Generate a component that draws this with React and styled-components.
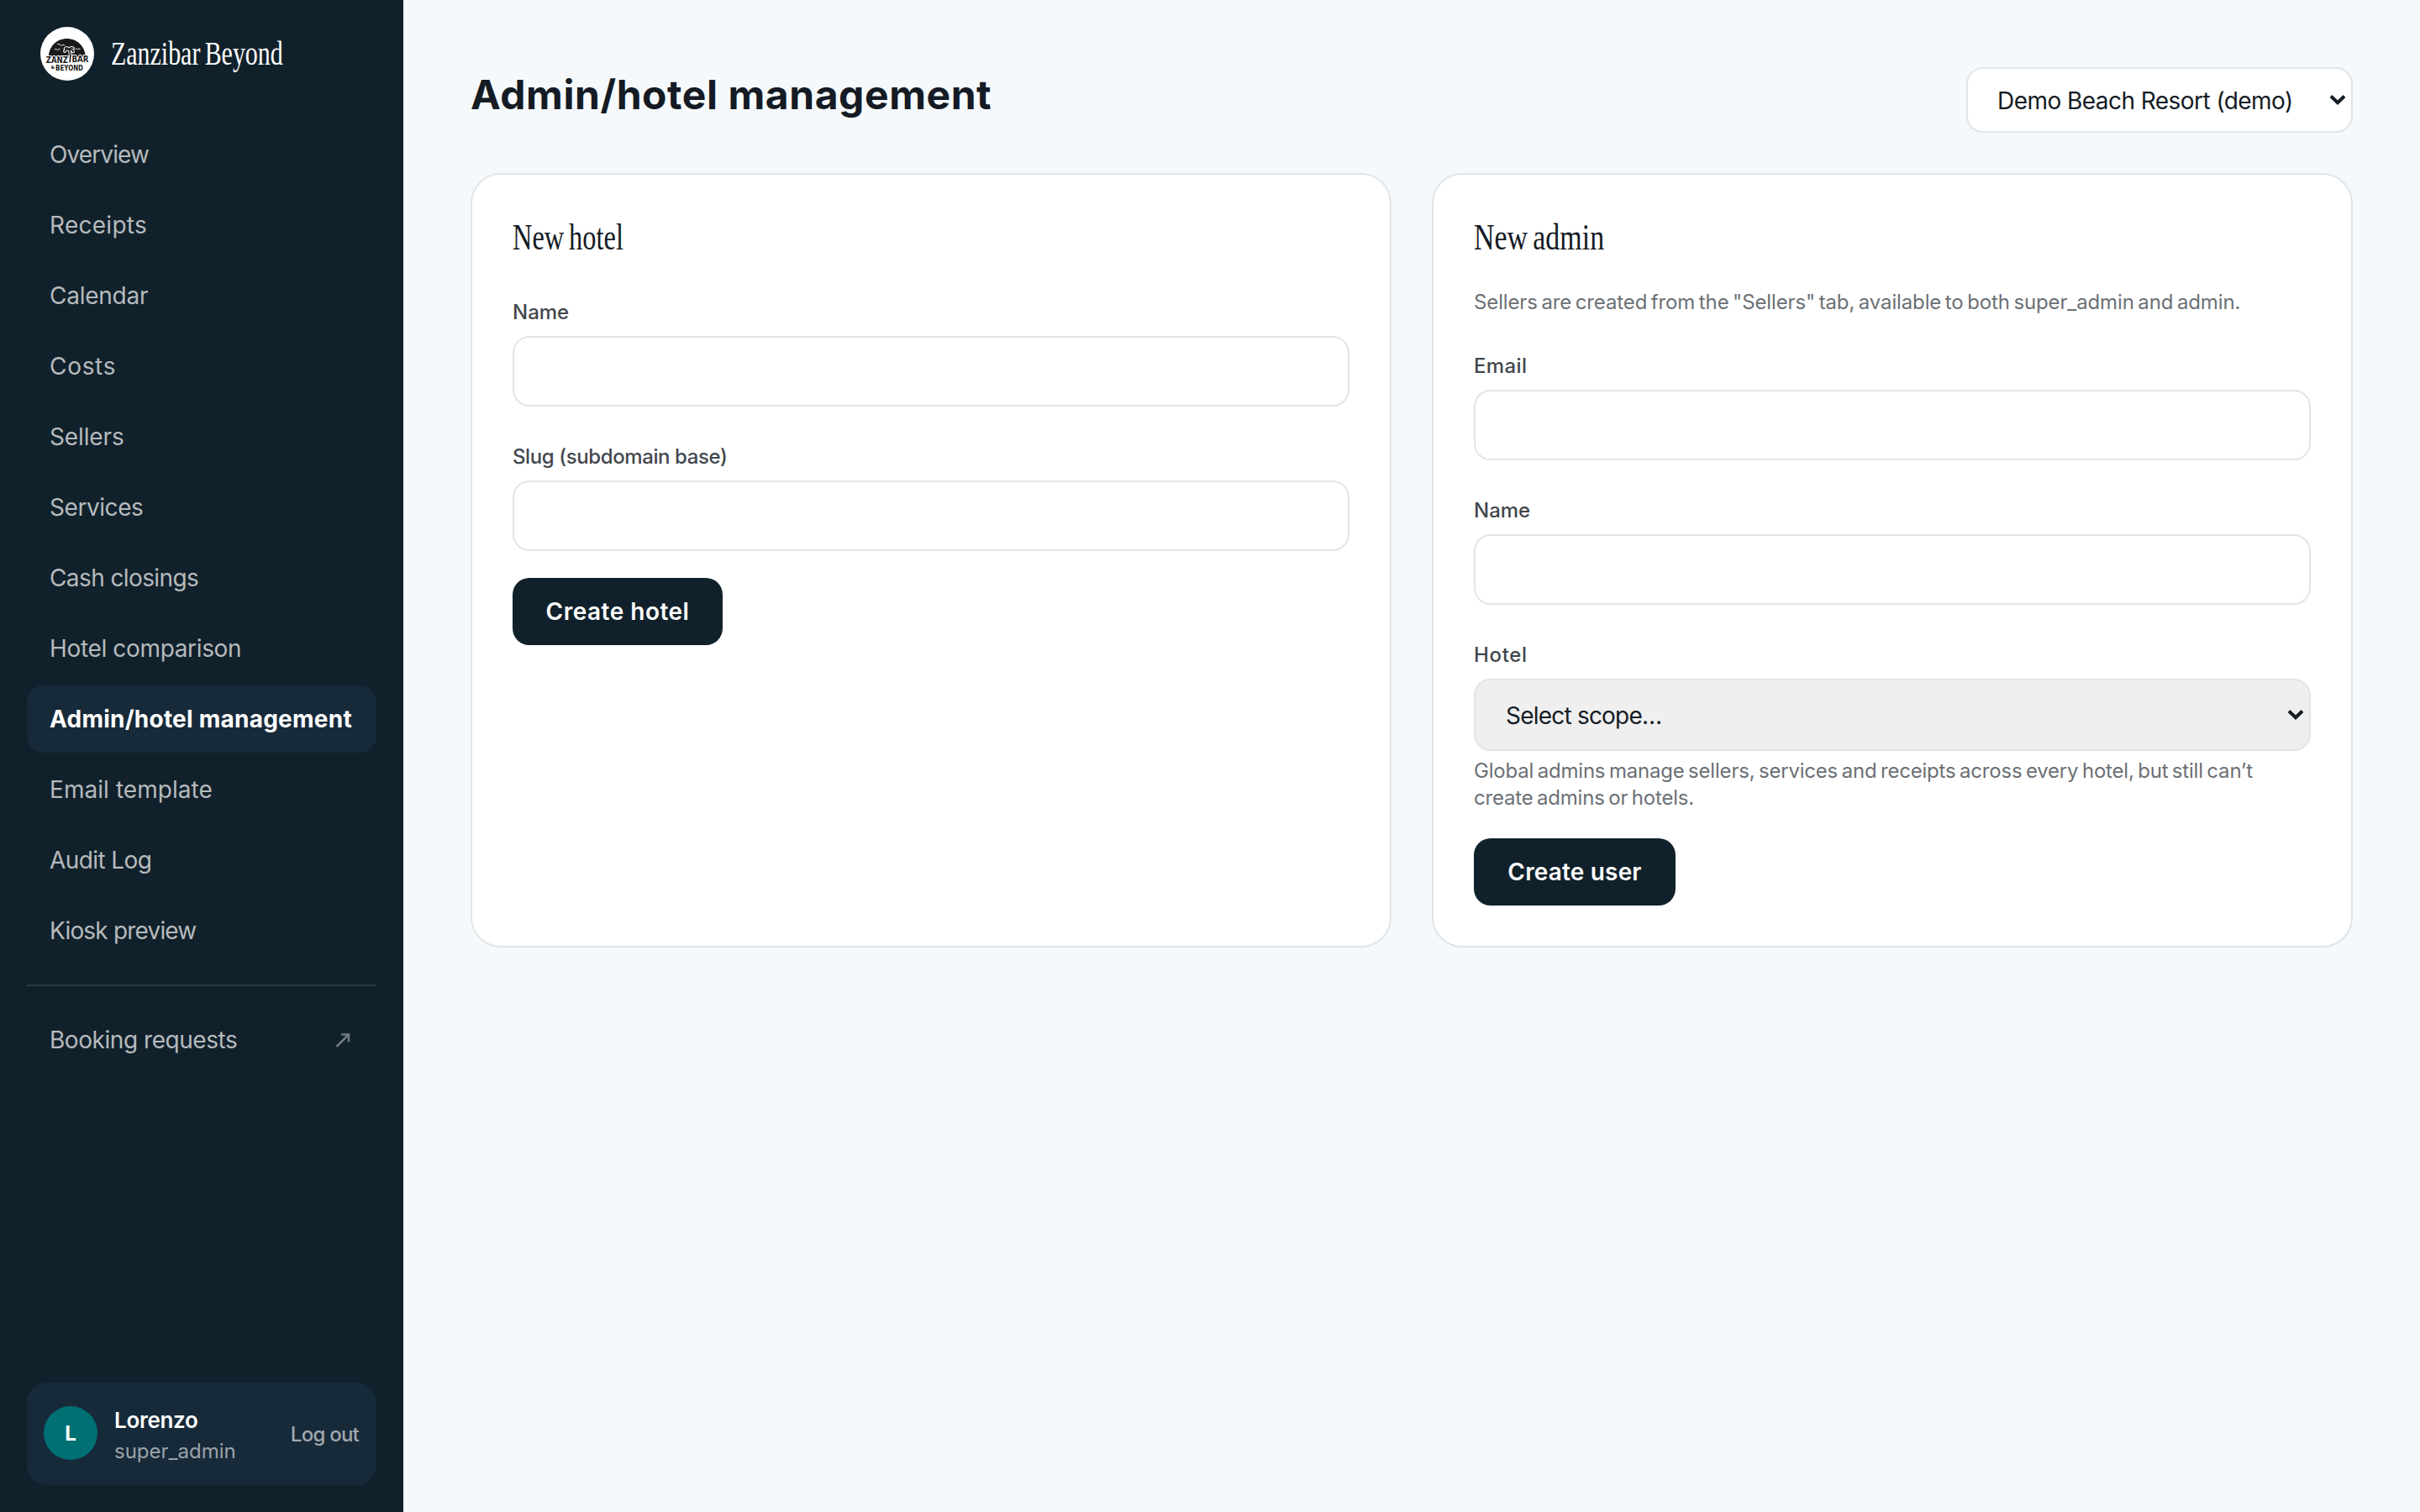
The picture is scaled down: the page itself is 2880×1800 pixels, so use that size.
import React from "react";
import styled, { createGlobalStyle } from "styled-components";

const colors = {
  primary: "#11212b",
  secondary: "#172a3a",
  accent: "#007074",
  page: "#f5f9fc",
  border: "#e1e5e8",
  text: "#141b24",
  label: "#42474d",
  muted: "#6b7075",
};

const GlobalStyle = createGlobalStyle`
  * {
    box-sizing: border-box;
  }
  body {
    margin: 0;
    background: ${colors.page};
    color: ${colors.text};
    font-family: Inter, "Liberation Sans", sans-serif;
    font-kerning: normal;
  }
  button {
    font-family: inherit;
    border: none;
    cursor: pointer;
  }
`;

const Layout = styled.div`
  display: flex;
  height: 100vh;
`;

// ---------- sidebar ----------

const Sidebar = styled.aside`
  display: flex;
  flex-direction: column;
  width: 480px;
  flex-shrink: 0;
  padding: 32px;
  background: ${colors.primary};
`;

const Brand = styled.div`
  display: flex;
  align-items: center;
  gap: 20px;
  height: 64px;
  padding: 0 16px;
  margin-bottom: 48px;
`;

const Logo = styled.svg`
  width: 64px;
  height: 64px;
  flex-shrink: 0;
`;

// Serif headings are condensed horizontally
const Condensed = styled.span`
  display: inline-block;
  font-family: "Liberation Serif", serif;
  font-weight: 400;
  font-size: ${({ $size }) => $size}px;
  line-height: 52px;
  white-space: nowrap;
  word-spacing: -3px;
  transform: scaleX(${({ $scale }) => $scale});
  transform-origin: left center;
`;

const BrandName = styled(Condensed)`
  padding-bottom: 3px;
  color: white;
`;

const Nav = styled.nav`
  display: flex;
  flex-direction: column;
  gap: 4px;
`;

const NavItem = styled.a`
  display: flex;
  align-items: center;
  justify-content: space-between;
  height: 80px;
  padding: 0 28px 0 27px;
  border-radius: 20px;
  font-size: 28px;
  white-space: nowrap;
  letter-spacing: ${({ $track }) => $track || 0}px;
  font-weight: ${({ $active }) => ($active ? 700 : 400)};
  color: ${({ $active }) => ($active ? "white" : "#b6babd")};
  background: ${({ $active }) => ($active ? colors.secondary : "transparent")};
`;

const ExternalIcon = styled.svg`
  width: 20px;
  height: 20px;
  margin-right: 2px;
  color: #70797f;
`;

const Divider = styled.hr`
  width: 100%;
  height: 2px;
  margin: 24px 0;
  border: none;
  background: #293841;
`;

const UserCard = styled.div`
  display: flex;
  align-items: center;
  height: 122px;
  margin-top: auto;
  padding: 0 21px 0 20px;
  border-radius: 24px;
  background: ${colors.secondary};
`;

const Avatar = styled.div`
  display: flex;
  align-items: center;
  justify-content: center;
  width: 64px;
  height: 64px;
  margin-top: -2px;
  border-radius: 50%;
  background: ${colors.accent};
  color: white;
  font-size: 24px;
  font-weight: 700;
`;

const UserInfo = styled.div`
  flex: 1;
  margin-left: 20px;
  padding-top: 2px;
`;

const UserName = styled.div`
  color: white;
  font-size: 26px;
  font-weight: 600;
  line-height: 40px;
  letter-spacing: -0.3px;
`;

const UserRole = styled.div`
  color: #9ca3a9;
  font-size: 24px;
  line-height: 34px;
`;

const LogoutBtn = styled.button`
  padding: 0;
  background: none;
  color: #a2a9ae;
  font-size: 24px;
  font-weight: 500;
  letter-spacing: -0.75px;
`;

// ---------- main ----------

const Main = styled.main`
  flex: 1;
  padding: 80px;
`;

const Header = styled.header`
  display: flex;
  justify-content: space-between;
  align-items: flex-start;
  height: 126px;
`;

const Title = styled.h1`
  margin: 0;
  font-size: 48px;
  font-weight: 700;
  line-height: 66px;
  letter-spacing: 0.56px;
`;

const SelectBox = styled.div`
  display: flex;
  align-items: center;
  justify-content: space-between;
  border: 2px solid ${colors.border};
  border-radius: 20px;
  font-size: 28px;
  letter-spacing: ${({ $track }) => $track || 0}px;
`;

const HotelSelect = styled(SelectBox)`
  width: 460px;
  height: 78px;
  padding: 2px 6px 0 35px;
  background: white;
`;

const ScopeSelect = styled(SelectBox)`
  height: 86px;
  padding: 2px 6px 0 36px;
  background: #efefef;
`;

const Chevron = styled.svg`
  width: 20px;
  height: 14px;
  margin-top: -3px;
`;

const Grid = styled.div`
  display: grid;
  grid-template-columns: 1fr 1fr;
  gap: 48px;
`;

const Card = styled.section`
  height: 922px;
  padding: 48px;
  border: 2px solid ${colors.border};
  border-radius: 36px;
  background: white;
`;

const CardTitle = styled.h2`
  height: 56px;
  margin: 0;
  font-weight: 400;
`;

const Description = styled.p`
  margin: 32px 0 0;
  color: ${colors.muted};
  font-size: 24px;
  line-height: 32px;
  letter-spacing: -0.13px;
  word-spacing: -2px;
`;

const Hint = styled.p`
  margin: 8px 0 32px;
  color: ${colors.muted};
  font-size: 24px;
  line-height: 32px;
  letter-spacing: -0.2px;
  word-spacing: -2px;
`;

const Field = styled.div`
  margin-top: 44px;
`;

const Label = styled.label`
  display: block;
  margin-bottom: 12px;
  color: ${colors.label};
  font-size: 24px;
  font-weight: 500;
  line-height: 32px;
  letter-spacing: ${({ $track }) => $track || 0}px;
`;

const Input = styled.input`
  display: block;
  width: 100%;
  height: 84px;
  padding: 0 36px;
  border: 2px solid ${colors.border};
  border-radius: 20px;
  background: white;
  font-size: 28px;
  outline: none;
`;

const SubmitBtn = styled.button`
  display: block;
  width: ${({ $width }) => $width}px;
  height: 80px;
  margin-top: 32px;
  padding: 0;
  border-radius: 20px;
  background: ${colors.primary};
  color: white;
  font-size: 28px;
  font-weight: 600;
  letter-spacing: ${({ $track }) => $track || 0}px;
`;

const navItems = [
  { label: "Overview", track: -0.89 },
  { label: "Receipts", track: 0.28 },
  { label: "Calendar", track: -0.24 },
  { label: "Costs", track: 0.7 },
  { label: "Sellers", track: -0.12 },
  { label: "Services", track: -0.44 },
  { label: "Cash closings", track: -0.6 },
  { label: "Hotel comparison", track: -0.35 },
  { label: "Admin/hotel management", track: 0.24, active: true },
  { label: "Email template", track: 0.06 },
  { label: "Audit Log", track: -0.6 },
  { label: "Kiosk preview", track: -0.82 },
];

function BrandLogo() {
  return (
    <Logo viewBox="0 0 64 64">
      <circle cx="32" cy="32" r="32" fill="white" />
      <path d="M9.8 35.5C10.3 23 19.5 14 31.6 14s21.5 9 22.1 21.5z" fill="#1a1a1a" />
      {/* birds */}
      <g fill="none" stroke="white" strokeWidth="0.9" strokeLinecap="round">
        <path d="M20.5 20.5q3-.6 4.200 1.800q1.800-1.600 4-.6" />
        <path d="M17.5 26.5q2.400-.2 3 1.200q1-1.400 2.600-1.400" />
        <path d="M42 26q2-.2 2.600 1q1-1.200 2.600-1" />
      </g>
      <g
        fill="#1a1a1a"
        stroke="white"
        strokeWidth="2"
        paintOrder="stroke"
        fontFamily="'DejaVu Sans', sans-serif"
        fontWeight="700"
      >
        <text x="6.8" y="42.8" fontSize="11" textLength="26" lengthAdjust="spacingAndGlyphs">
          ZANZ
        </text>
        <text x="37.5" y="41.8" fontSize="11" textLength="20" lengthAdjust="spacingAndGlyphs">
          BAR
        </text>
        <text x="12.5" y="50" fontSize="5.500" textLength="4.500" lengthAdjust="spacingAndGlyphs" strokeWidth="0">
          &amp;
        </text>
        <text x="18" y="52" fontSize="8" textLength="33" lengthAdjust="spacingAndGlyphs" strokeWidth="0">
          BEYOND
        </text>
      </g>
      {/* palm */}
      <g strokeLinecap="round" strokeLinejoin="round" fill="none">
        <path
          d="M34.5 27Q36.5 33 35.200 41.500M34.5 27q-4-1.5-5.5 2M34.5 27q-2.5-3.5-5-1M34.5 27q1-3 4.5-1.7M34.5 27q4-.5 4.500 2.500"
          stroke="white"
          strokeWidth="3.800"
        />
        <path
          d="M34.5 27Q36.5 33 35.200 41.500M34.5 27q-4-1.5-5.5 2M34.5 27q-2.5-3.5-5-1M34.5 27q1-3 4.5-1.7M34.5 27q4-.5 4.500 2.500"
          stroke="#1a1a1a"
          strokeWidth="1.700"
        />
      </g>
    </Logo>
  );
}

function ChevronIcon() {
  return (
    <Chevron viewBox="0 0 20 14">
      <path d="M2 2.5L10 10.200L18 2.5" fill="none" stroke={colors.text} strokeWidth="4" />
    </Chevron>
  );
}

export default function App() {
  return (
    <>
      <GlobalStyle />
      <Layout>
        <Sidebar>
          <Brand>
            <BrandLogo />
            <BrandName $size={41} $scale={0.73}>
              Zanzibar Beyond
            </BrandName>
          </Brand>
          <Nav>
            {navItems.map((item) => (
              <NavItem key={item.label} $active={item.active} $track={item.track}>
                {item.label}
              </NavItem>
            ))}
          </Nav>
          <Divider />
          <Nav>
            <NavItem $track={-0.45}>
              Booking requests
              <ExternalIcon viewBox="0 0 20 20">
                <path
                  d="M2.5 18L17 3.5M8 3.5H17V12.5"
                  fill="none"
                  stroke="currentColor"
                  strokeWidth="2.500"
                />
              </ExternalIcon>
            </NavItem>
          </Nav>
          <UserCard>
            <Avatar>L</Avatar>
            <UserInfo>
              <UserName>Lorenzo</UserName>
              <UserRole>super_admin</UserRole>
            </UserInfo>
            <LogoutBtn>Log out</LogoutBtn>
          </UserCard>
        </Sidebar>

        <Main>
          <Header>
            <Title>Admin/hotel management</Title>
            <HotelSelect $track={-0.55}>
              Demo Beach Resort (demo)
              <ChevronIcon />
            </HotelSelect>
          </Header>

          <Grid>
            <Card>
              <CardTitle>
                <Condensed $size={45} $scale={0.72}>
                  New hotel
                </Condensed>
              </CardTitle>
              <Field>
                <Label>Name</Label>
                <Input />
              </Field>
              <Field>
                <Label $track={-0.4}>Slug (subdomain base)</Label>
                <Input />
              </Field>
              <SubmitBtn $width={250} $track={0.49}>
                Create hotel
              </SubmitBtn>
            </Card>

            <Card>
              <CardTitle>
                <Condensed $size={45} $scale={0.754}>
                  New admin
                </Condensed>
              </CardTitle>
              <Description>
                Sellers are created from the "Sellers" tab, available to both super_admin and admin.
              </Description>
              <Field>
                <Label $track={0.38}>Email</Label>
                <Input />
              </Field>
              <Field>
                <Label>Name</Label>
                <Input />
              </Field>
              <Field>
                <Label $track={0.65}>Hotel</Label>
                <ScopeSelect $track={-0.79}>
                  Select scope…
                  <ChevronIcon />
                </ScopeSelect>
              </Field>
              <Hint>
                Global admins manage sellers, services and receipts across every hotel, but still can’t
                create admins or hotels.
              </Hint>
              <SubmitBtn $width={240} $track={0.17}>
                Create user
              </SubmitBtn>
            </Card>
          </Grid>
        </Main>
      </Layout>
    </>
  );
}
